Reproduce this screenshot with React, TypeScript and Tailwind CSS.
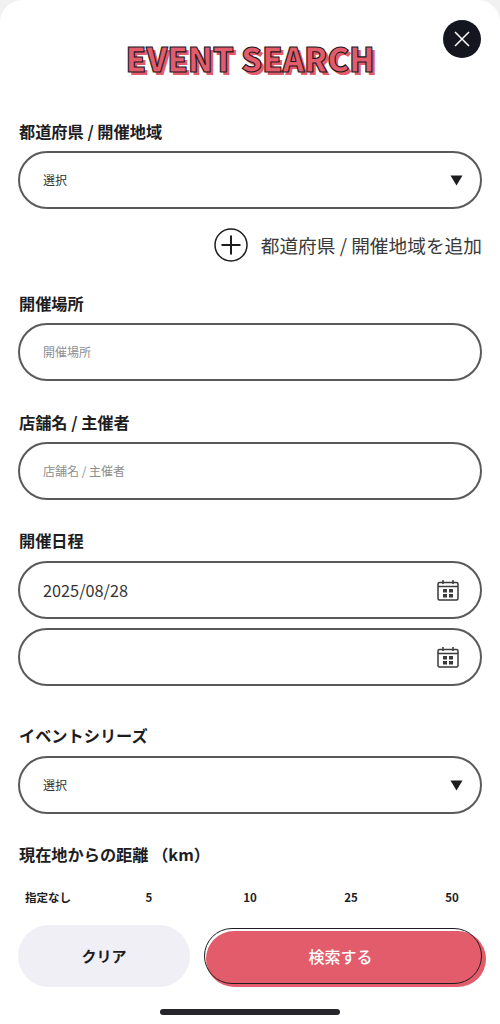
const fontStack = "font-['Noto_Sans_CJK_JP','Noto_Sans',sans-serif]"

const fieldClass =
  'flex h-[58px] w-full items-center justify-between rounded-full border-2 border-[#5a5a5a] bg-white pl-[23px] pr-[21px]'

const FieldLabel = ({ children, className }: { children: string; className: string }) => (
  <div className={`ml-px text-[16.2px] font-bold leading-[22px] text-[#1d1d1f] ${className}`}>{children}</div>
)

const SelectField = () => (
  <div className={fieldClass}>
    <span className="text-[12px] text-[#333]">選択</span>
    <svg width="13" height="11" viewBox="0 0 13 11" className="mr-[-4px]">
      <path d="M0.5 0.5h12L6.5 10.5z" fill="#1d1d1f" />
    </svg>
  </div>
)

const TextField = ({ placeholder }: { placeholder: string }) => (
  <div className={fieldClass}>
    <span className="text-[12px] text-[#8e8e8e]">{placeholder}</span>
  </div>
)

const CalendarIcon = () => (
  <svg width="22" height="22" viewBox="0 0 22 22" fill="none" stroke="#3a3a3a" strokeWidth="1.5">
    <rect x="1" y="3.5" width="20" height="17.5" rx="1.5" />
    <path d="M1 7.5h20M6 1v4M16 1v4" />
    <g fill="#3a3a3a" stroke="none">
      <rect x="6" y="10" width="4" height="3.5" />
      <rect x="12" y="10" width="4" height="3.5" />
      <rect x="6" y="15" width="4" height="3.5" />
      <rect x="12" y="15" width="4" height="3.5" />
    </g>
  </svg>
)

const DateField = ({ value, className }: { value?: string; className?: string }) => (
  <div className={`${fieldClass} ${className ?? ''}`}>
    <span className="text-[16.3px] text-[#333]">{value}</span>
    <CalendarIcon />
  </div>
)

const App = () => {
  const distances = ['指定なし', '5', '10', '25', '50']

  return (
    <div className={`h-[1024px] w-[500px] overflow-hidden bg-[#f1f1f1] ${fontStack}`}>
      <div className="relative h-full rounded-t-[22px] bg-white px-[18px]">
        <button className="absolute right-[19px] top-[20px] flex h-[38px] w-[38px] items-center justify-center rounded-full bg-[#14161f]">
          <svg width="18" height="18" viewBox="0 0 18 18" stroke="#fff" strokeWidth="1.5">
            <path d="M2 2l14 14M16 2L2 16" />
          </svg>
        </button>

        <h1 className="pt-[35px] text-center text-[33px] font-black leading-[46px] tracking-[-0.2px] text-[#e25c6b] [-webkit-text-stroke:1.1px_#23181c] [text-shadow:3px_3px_0_#e25c6b]">
          EVENT SEARCH
        </h1>

        <FieldLabel className="mt-[39px]">都道府県 / 開催地域</FieldLabel>
        <div className="mt-[9px]">
          <SelectField />
        </div>

        <div className="mt-[19px] flex items-center justify-end gap-[13px]">
          <svg width="34" height="34" viewBox="0 0 34 34" fill="none" stroke="#1d1d1f">
            <circle cx="17" cy="17" r="16" strokeWidth="1.5" />
            <path d="M7.5 17h19M17 7.5v19" strokeWidth="2" />
          </svg>
          <span className="text-[18.7px] leading-[34px] text-[#3a3a3a]">都道府県 / 開催地域を追加</span>
        </div>

        <FieldLabel className="mt-[30px]">開催場所</FieldLabel>
        <div className="mt-[9px]">
          <TextField placeholder="開催場所" />
        </div>

        <FieldLabel className="mt-[30px]">店舗名 / 主催者</FieldLabel>
        <div className="mt-[9px]">
          <TextField placeholder="店舗名 / 主催者" />
        </div>

        <FieldLabel className="mt-[29px]">開催日程</FieldLabel>
        <div className="mt-[10px]">
          <DateField value="2025/08/28" />
          <DateField className="mt-[9px]" />
        </div>

        <FieldLabel className="mt-[38px]">イベントシリーズ</FieldLabel>
        <div className="mt-[10px]">
          <SelectField />
        </div>

        <FieldLabel className="mt-[29px]">現在地からの距離 （km）</FieldLabel>

        <div className="mt-[24px] flex justify-between">
          {distances.map((distance) => (
            <span
              key={distance}
              className="w-[60px] text-center text-[11.5px] font-bold leading-[16px] text-[#1d1d1f]"
            >
              {distance}
            </span>
          ))}
        </div>

        <div className="mt-[20px] flex gap-[14px]">
          <button className="h-[62px] w-[172px] rounded-full bg-[#efeff5] text-[15px] font-bold text-[#1d1d1f]">
            クリア
          </button>
          <div className="relative mt-[3px] h-[56px] flex-1">
            <span className="absolute bottom-[-3px] left-[2px] right-[-4px] top-[3px] rounded-full bg-[#e25c6b]" />
            <button className="relative h-full w-full rounded-full border-[1.5px] border-[#1d1d1f] pr-[5px] text-[16px] font-medium text-white">
              検索する
            </button>
          </div>
        </div>

        <div className="mx-auto mt-[22px] h-[6px] w-[180px] rounded-full bg-[#26262a]" />
      </div>
    </div>
  )
}

export default App
